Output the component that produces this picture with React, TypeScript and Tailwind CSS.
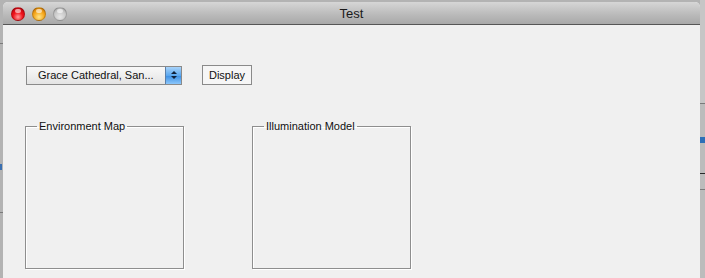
import React from 'react';

const Light = ({ color }: { color: 'red' | 'orange' | 'gray' }) => {
  const bg =
    color === 'red'
      ? 'bg-[radial-gradient(circle_at_50%_75%,#ff9a9a_0%,#f0141c_45%,#b0000a_100%)]'
      : color === 'orange'
        ? 'bg-[radial-gradient(circle_at_50%_75%,#ffe58a_0%,#f6a81c_50%,#c06a00_100%)]'
        : 'bg-[radial-gradient(circle_at_50%_75%,#e6e6e6_0%,#c8c8c8_55%,#a2a2a2_100%)]';
  return (
    <div className={`relative w-[14px] h-[14px] rounded-full border border-black/20 ${bg}`}>
      <div className="absolute left-[3px] top-[1px] w-[6px] h-[4px] rounded-full bg-white/60" />
    </div>
  );
};

const GroupBox = ({ label }: { label: string }) => (
  <fieldset className="w-[159px] h-[149px] border border-[#8e8e8e] px-0 shadow-[inset_1px_1px_0_#ffffff,1px_1px_0_#ffffff]">
    <legend className="ml-[11px] px-[2px] text-[11px] leading-[13px] text-[#111]">{label}</legend>
  </fieldset>
);

export default function App() {
  return (
    <div className="relative w-[705px] h-[278px] flex bg-[#b3b3b3] font-['Liberation_Sans',Arial,sans-serif] overflow-hidden">
      {/* background window slivers */}
      <div className="w-[3px] flex flex-col">
        <div className="h-[43px]" />
        <div className="h-px bg-[#7a7a7a]" />
        <div className="h-[120px]" />
        <div className="h-[6px] w-[2px] bg-[#3a6fb0]" />
        <div className="h-[42px]" />
        <div className="h-px bg-[#7a7a7a]" />
      </div>

      <div className="mt-[2px] w-[697px] flex flex-col rounded-t-[5px] overflow-hidden bg-[#f0f0f0]">
        {/* title bar */}
        <div className="relative h-[23px] flex items-center bg-[linear-gradient(#d6d6d6,#b9b9b9_60%,#a9a9a9)] border-b border-[#565656]">
          <div className="flex gap-[7px] pl-[8px] pt-[1px]">
            <Light color="red" />
            <Light color="orange" />
            <Light color="gray" />
          </div>
          <div className="absolute inset-0 flex items-center justify-center text-[13px] text-[#1a1a1a] pt-[1px]">Test</div>
        </div>

        {/* content */}
        <div className="flex-1 flex flex-col pl-[22px] pt-[40px]">
          <div className="flex items-center gap-[20px]">
            <div className="ml-px w-[156px] h-[19px] flex border border-[#8a8a8a] bg-[linear-gradient(#f8f8f8,#e4e4e4)]">
              <div className="flex-1 pl-[11px] text-[11px] leading-[17px] text-[#111]">Grace Cathedral, San...</div>
              <div className="w-[16px] flex flex-col items-center justify-center gap-[2px] bg-[linear-gradient(#a8d3fa,#5aa7ef_50%,#3a8ee4_51%,#8cc7fb)] border-l border-[#5a7fa8]">
                <div className="w-0 h-0 border-x-[3px] border-x-transparent border-b-[3px] border-b-[#10213a]" />
                <div className="w-0 h-0 border-x-[3px] border-x-transparent border-t-[3px] border-t-[#10213a]" />
              </div>
            </div>
            <div className="w-[50px] h-[20px] flex items-center justify-center border border-[#8a8a8a] bg-[#f6f6f6] text-[11px] text-[#111]">
              Display
            </div>
          </div>

          <div className="flex gap-[68px] mt-[35px]">
            <GroupBox label="Environment Map" />
            <GroupBox label="Illumination Model" />
          </div>
        </div>
      </div>

      <div className="w-[5px] flex flex-col bg-[#bcbcbc]">
        <div className="h-[103px] bg-[#c6c6c6]" />
        <div className="h-px bg-[#7a7a7a]" />
        <div className="h-[33px]" />
        <div className="h-[6px] bg-[#2e6fb7]" />
        <div className="h-[30px]" />
        <div className="h-px bg-[#2a2a2a]" />
        <div className="h-[15px]" />
        <div className="h-px bg-[#7a7a7a]" />
      </div>
    </div>
  );
}
